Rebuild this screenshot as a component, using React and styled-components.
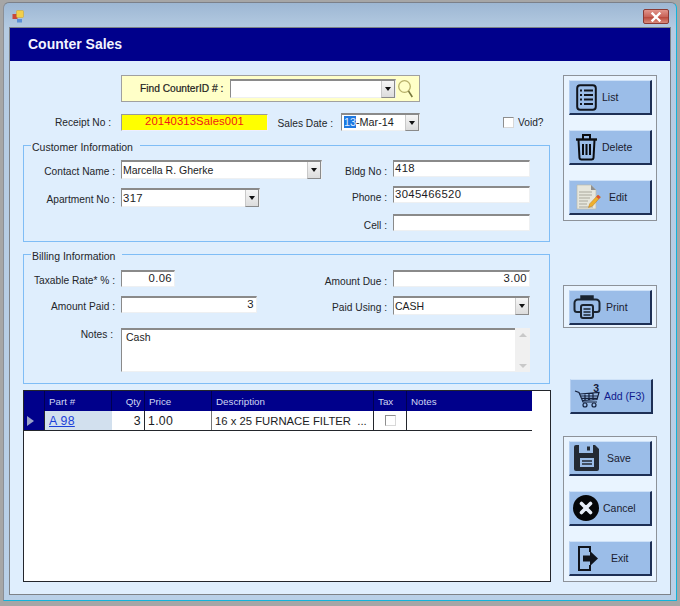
import React from "react";
import styled, { createGlobalStyle } from "styled-components";

const Global = createGlobalStyle`
  html, body { margin: 0; padding: 0; background: #a6a6a6; }
  * { box-sizing: border-box; }
  body { font-family: "Liberation Sans", Arial, sans-serif; }
`;
const Screen = styled.div`
  width: 680px; height: 606px; overflow: hidden; background: #a6a6a6; padding: 2px 3px 5px;
`;
const Win = styled.div`
  width: 674px; height: 599px; display: flex; flex-direction: column; padding: 0 5px 5px 5px;
  background: linear-gradient(180deg, #9db7d3 0, #b5cbe2 26px, #b9d0e8 100%);
  border-radius: 6px 6px 0 0; border: 1px solid #8b8f96; border-bottom-color: #10b4dc; border-right-color: #10b4dc; border-top-color: #7c8088;
`;
const TitleBar = styled.div`
  height: 24px; flex: none; display: flex; align-items: center; justify-content: space-between; padding: 3px 2px 0 3px;
`;
const CloseBtn = styled.div`
  width: 26px; height: 15px; border: 1px solid #8a3a34; border-radius: 2px; display: flex; align-items: center; justify-content: center;
  background: linear-gradient(180deg, #e2958b 0, #c9655a 50%, #b9483b 55%, #d98a7c 100%);
`;
const Client = styled.div`
  width: 662px; height: 568px; flex: none; background: #dfeefd; border: 1px solid #7d8288; display: flex; flex-direction: column;
`;
const Header = styled.div`
  height: 33px; flex: none; background: #00008b; color: #f2f4ff; font-size: 14px; font-weight: 700; padding-left: 18px; display: flex; align-items: center; padding-bottom: 2px;
`;
const Body = styled.div`
  flex: 1; display: flex; padding-top: 14px;
`;
const Main = styled.div`
  width: 550px; flex: none; padding-left: 13px; display: flex; flex-direction: column;
`;
const Side = styled.div`
  width: 94px; margin-left: 3px; display: flex; flex-direction: column;
`;
const FindBar = styled.div`
  margin-left: 98px; width: 299px; height: 27px; background: #ffffc8; border: 1px solid #a0a0a0; display: flex; align-items: center; padding-left: 18px; color: #222;
`;
const FindLabel = styled.span`
  width: 90px; flex: none; white-space: nowrap; font-size: 10.2px; -webkit-text-stroke: 0.2px #222;
`;
const Row = styled.div`
  display: flex; align-items: center; margin-top: ${p => p.$top || 0}px; height: ${p => p.$h || 17}px; flex: none;
`;
const Label = styled.label`
  width: ${p => p.$w}px; flex: none; text-align: right; margin-right: ${p => p.$mr ?? 6}px; font-size: 10.2px; color: #24262a; white-space: nowrap; padding-top: ${p => p.$pt ?? 3}px;
`;
const NotesLabel = styled(Label)`
  align-self: flex-start; padding-top: 1px; padding-right: 2px;
`;
const Sunken = styled.div`
  width: ${p => p.$w}px; height: ${p => p.$h || 17}px; flex: none; background: #fff; display: flex; align-items: center; position: relative;
  border-top: 2px solid #8a8a8a; border-left: 1px solid #8a8a8a; border-right: 1px solid #eef0f2; border-bottom: 1px solid #eef0f2;
  font-size: ${p => p.$mono ? "11.3px" : "10.5px"}; letter-spacing: ${p => p.$mono ? "0.35px" : "0"}; color: #1c1c24; padding: 0 ${p => p.$pr ?? 1}px ${p => p.$pb ?? 2}px 1px;
  justify-content: ${p => p.$right ? "flex-end" : "flex-start"}; white-space: nowrap;
`;
const Grow = styled.span`
  flex: 1; min-width: 0;
`;
const DateText = styled.span`
  letter-spacing: 0; padding-left: 1px; font-size: 10.8px;
`;
const ArrowBox = styled.span`
  width: 14px; align-self: stretch; flex: none; margin: 0 0 -2px 0; background: linear-gradient(180deg, #f6f6f6, #dcdcdc); border-left: 1px solid #c9c9c9; border-right: 1px solid #8a8a8a; border-bottom: 1px solid #8a8a8a; display: flex; align-items: center; justify-content: center;
  &::after { content: ""; border: 3px solid transparent; border-top: 4px solid #111; border-bottom: 0; }
`;
const ReceiptField = styled.div`
  margin-left: 6px; width: 147px; height: 17px; background: #ffff00; border: 1px solid #9a9a9a; border-right-color: #eef; border-bottom-color: #eef; color: #f01818; font-size: 11.3px; text-align: center; line-height: 13px; letter-spacing: 0.1px;
`;
const Sel = styled.span`
  background: #1e78e0; color: #dfeaff;
`;
const CheckBox = styled.span`
  display: inline-block; width: 11px; height: 11px; flex: none; background: #fff; border: 1px solid #8e8e8e; border-right-color: #d8d8d8; border-bottom-color: #d8d8d8;
`;
const VoidWrap = styled.div`
  margin-left: 83px; display: flex; align-items: center; gap: 4px; font-size: 10.2px; color: #24262a;
`;
const Group = styled.div`
  position: relative; width: 527px; height: ${p => p.$h}px; margin-top: ${p => p.$top}px; flex: none; border: 1px solid #7fbdf6; padding: ${p => p.$pt}px 0 0 0;
`;
const Legend = styled.div`
  position: absolute; top: -5px; left: 7px; background: #dfeefd; padding: 0 7px 0 1px; font-size: 10.5px; color: #24262a; line-height: 12px;
`;
const Columns = styled.div`
  display: flex;
`;
const Col = styled.div`
  width: ${p => p.$w}px; flex: none; display: flex; flex-direction: column;
`;
const NotesBox = styled(Sunken)`
  align-items: flex-start; padding: 1px 0 0 4px;
`;
const VBar = styled.div`
  position: absolute; right: -1px; top: -2px; bottom: -1px; width: 15px; background: #f0f0f0; display: flex; flex-direction: column; justify-content: space-between; align-items: center; padding: 5px 0 4px; 
`;
const Table = styled.div`
  width: 528px; height: 192px; margin-top: 6px; flex: none; background: #fff; border: 1px solid #23262c; font-size: 10px;
`;
const TRow = styled.div`
  display: grid; width: 508px; height: ${p => p.$h}px; grid-template-columns: 20px 67px 33px 67px 162px 33px 1fr;
  background: ${p => p.$head ? "#00008b" : "#fff"}; border-bottom: ${p => p.$head ? "none" : "1px solid #23262c"};
`;
const TH = styled.div`
  color: #cfd6f2; display: flex; align-items: center; padding-left: ${p => p.$pl ?? 4}px; border-left: 1px solid #000050; justify-content: ${p => p.$right ? "flex-end" : "flex-start"}; padding-right: 3px; font-size: 9.8px;
`;
const RowHead = styled.div`
  background: #00008b; display: flex; align-items: center; padding-left: 3px; 
  &::after { content: ""; border-left: 7px solid #9aa2c8; border-top: 5px solid transparent; border-bottom: 5px solid transparent; }
`;
const TD = styled.div`
  display: flex; align-items: center; overflow: hidden; white-space: nowrap; padding: 0 3px 0 ${p => p.$pl ?? 3}px; font-size: ${p => p.$big ? "12.3px" : "11.3px"}; letter-spacing: ${p => p.$big ? "0.3px" : "0"}; color: #1c1c24;
  background: ${p => p.$bg || "#fff"}; border-left: 1px solid ${p => p.$line || "#23262c"};
  justify-content: ${p => p.$center ? "center" : p.$right ? "flex-end" : "flex-start"};
`;
const PartLink = styled.a`
  color: #1c3fd8; text-decoration: underline;
`;
const Panel = styled.div`
  width: 94px; height: ${p => p.$h}px; margin-top: ${p => p.$top || 0}px; flex: none; background: #e9f4ff; border: 1px solid #8d9299; padding: 4px 4px 0 5px; display: flex; flex-direction: column; gap: 15px;
`;
const Btn = styled.button`
  width: ${p => p.$w || 83}px; height: 35px; flex: none; padding: 0; display: grid; grid-template-columns: ${p => p.$x}px 1fr; align-items: center; text-align: left;
  background: #9bbde8; border: 0; border-top: 1px solid #cfe2f8; border-left: 1px solid #b4cef0; border-right: 2px solid #1d2f55; border-bottom: 2px solid #1d2f55;
  font: 10.5px "Liberation Sans", Arial, sans-serif; color: ${p => p.$c || "#1a2030"};
`;
const Slot = styled.span`
  display: flex; align-items: center; padding-left: ${p => p.$l}px; height: 32px;
`;
const AddWrap = styled.div`
  margin: 51px 0 0 7px; flex: none;
`;

const IList = () => (
  <svg width="21" height="27" viewBox="0 0 21 27" fill="none" stroke="#10141c"><rect x="1.2" y="1.2" width="18.6" height="24.6" rx="3" strokeWidth="2"/><path d="M4 6.5h2M8 6.5h9M4 11h2M8 11h9M4 15.5h2M8 15.5h9M4 20h2M8 20h9" strokeWidth="2.2"/></svg>
);
const ITrash = () => (
  <svg width="23" height="28" viewBox="0 0 23 28" fill="none" stroke="#0a0c10"><path d="M1 6.5h21" strokeWidth="2.4"/><path d="M8 6V2h7v4" strokeWidth="2"/><path d="M3.5 7l1 18a2 2 0 0 0 2 1.6h10a2 2 0 0 0 2-1.6l1-18" strokeWidth="2"/><path d="M8 11v11M11.5 11v11M15 11v11" strokeWidth="2"/></svg>
);
const IEdit = () => (
  <svg width="26" height="28" viewBox="0 0 26 28"><path d="M2 2h14l5 5v19H2z" fill="#e6e6dc" stroke="#b9b9ac" strokeWidth=".7"/><path d="M16 2v5h5z" fill="#8f8f8f"/><path d="M4 9h13M4 12h13M4 15h11M4 18h9M4 21h8M4 24h14" stroke="#aaa89c" strokeWidth="1"/><path d="M23 12l2.5 2-8 9-4 1.5 1.3-3.8z" fill="#efb02c" stroke="#b9791a" strokeWidth=".5"/><path d="M23 12l2.5 2-1.7 1.9-2.5-2z" fill="#d8503a"/></svg>
);
const IPrint = () => (
  <svg width="28" height="26" viewBox="0 0 28 26" fill="none" stroke="#1a2430"><path d="M8 5V2h12v3" fill="#1a2430" strokeWidth="1.5"/><path d="M7 18H4a2.5 2.5 0 0 1-2.5-2.5V9A3.5 3.5 0 0 1 5 5.5h18A3.5 3.5 0 0 1 26.5 9v6.5A2.5 2.5 0 0 1 24 18h-3" strokeWidth="2"/><rect x="8" y="11" width="12" height="13" rx="2" fill="#9bbde8" strokeWidth="2"/><path d="M10.5 15h7M10.5 18h7M10.5 21h7" strokeWidth="1.5"/></svg>
);
const ICart = () => (
  <svg width="27" height="24" viewBox="0 0 27 24" fill="none" stroke="#14203c" strokeWidth="1.2"><path d="M1 7l4 1.5L9 18h14"/><path d="M6 10l19-1.5-2 7L9 16.5M7 12h17M8 14.3h15M11 9.5v7M15 9v7.5M19 9v7.5"/><circle cx="11" cy="21" r="2"/><circle cx="20" cy="21" r="2"/></svg>
);
const ISave = () => (
  <svg width="27" height="28" viewBox="0 0 27 28"><path d="M1 3a2 2 0 0 1 2-2h19l4 4v20a2 2 0 0 1-2 2H3a2 2 0 0 1-2-2z" fill="#232a34"/><rect x="6" y="1" width="14" height="8" fill="#9bbde8"/><rect x="14" y="2.5" width="3" height="4" fill="#232a34"/><rect x="7" y="14" width="14" height="9" fill="#9bbde8"/><path d="M9 17h10M9 20h10" stroke="#232a34" strokeWidth="1.5"/></svg>
);
const ICancel = () => (
  <svg width="26" height="26" viewBox="0 0 26 26"><circle cx="13" cy="13" r="13" fill="#050608"/><path d="M8.5 8.5l9 9M17.5 8.5l-9 9" stroke="#e8eef8" strokeWidth="3.6" strokeLinecap="round"/></svg>
);
const IExit = () => (
  <svg width="22" height="27" viewBox="0 0 22 27" fill="none"><path d="M13 7V2H2v23h11v-5" stroke="#10141c" strokeWidth="2"/><path d="M6 10.5h7V6l8 7.5-8 7.5v-4.5H6z" fill="#10141c"/></svg>
);
const ISearch = () => (
  <svg width="17" height="20" viewBox="0 0 17 20" fill="none"><circle cx="7.5" cy="7.5" r="5.8" stroke="#b7b06a" strokeWidth="1.3"/><path d="M11.5 12l3.8 6" stroke="#76763c" strokeWidth="1.5"/></svg>
);
const IApp = () => (
  <svg width="13" height="13" viewBox="0 0 13 13"><rect x="0.5" y="4" width="5" height="5" fill="#c8483c"/><rect x="4.5" y="0.5" width="7" height="7" rx="1" fill="#f2cf4a" stroke="#c7a02c" strokeWidth=".5"/><rect x="5" y="9" width="5" height="3.5" fill="#5b8fd8"/></svg>
);
const IClose = () => (
  <svg width="12" height="10" viewBox="0 0 12 10"><path d="M2.5 1.5l7 7M9.5 1.5l-7 7" stroke="#fff" strokeWidth="2.4" strokeLinecap="square"/></svg>
);
const AddStack = styled.span`
  display: flex; flex-direction: column; align-items: flex-end; position: relative; width: 27px;
`;
const Badge = styled.span`
  position: absolute; top: -1px; right: 2px; font-size: 10.5px; font-weight: 700; color: #14203c; line-height: 11px;
`;
const UpDown = styled.span`
  width: 0; height: 0; border-left: 4px solid transparent; border-right: 4px solid transparent; ${p => p.$down ? "border-top: 4px solid #c8c8c8;" : "border-bottom: 4px solid #c8c8c8;"}
`;
const Combo = ({ w, h = 19, mono, children }) => (
  <Sunken $w={w} $h={h} $mono={mono} $pr={0} $pb={1}><Grow>{children}</Grow><ArrowBox /></Sunken>
);

export default function App() {
  return (
    <Screen>
      <Global />
      <Win>
        <TitleBar><IApp /><CloseBtn><IClose /></CloseBtn></TitleBar>
        <Client>
          <Header>Counter Sales</Header>
          <Body>
            <Main>
              <FindBar>
                <FindLabel>Find CounterID # :</FindLabel>
                <Combo w={166} />
                <Slot $l={1}><ISearch /></Slot>
              </FindBar>
              <Row $top={11} $h={18}>
                <Label $w={88} $mr={4} $pt={1}>Receipt No :</Label>
                <ReceiptField>20140313Sales001</ReceiptField>
                <Label $w={65} $mr={8}>Sales Date :</Label>
                <Combo w={79} h={18} mono><DateText><Sel>13</Sel>-Mar-14</DateText></Combo>
                <VoidWrap><CheckBox />Void?</VoidWrap>
              </Row>
              <Group $h={97} $top={14} $pt={14}>
                <Legend>Customer Information</Legend>
                <Columns>
                  <Col $w={298}>
                    <Row $h={19}><Label $w={91}>Contact Name :</Label><Combo w={201}>Marcella R. Gherke</Combo></Row>
                    <Row $h={19} $top={9}><Label $w={91}>Apartment No :</Label><Combo w={139} mono>317</Combo></Row>
                  </Col>
                  <Col $w={208}>
                    <Row><Label $w={65} $pt={5}>Bldg No :</Label><Sunken $w={137} $mono>418</Sunken></Row>
                    <Row $top={9}><Label $w={65} $pt={5}>Phone :</Label><Sunken $w={137} $mono>3045466520</Sunken></Row>
                    <Row $top={11}><Label $w={65} $pt={5}>Cell :</Label><Sunken $w={137} /></Row>
                  </Col>
                </Columns>
              </Group>
              <Group $h={130} $top={12} $pt={15}>
                <Legend>Billing Information</Legend>
                <Columns>
                  <Col $w={298}>
                    <Row><Label $w={91}>Taxable Rate* % :</Label><Sunken $w={54} $mono $right $pr={2}>0.06</Sunken></Row>
                    <Row $top={9}><Label $w={91}>Amount Paid :</Label><Sunken $w={136} $mono $right $pr={2}>3</Sunken></Row>
                  </Col>
                  <Col $w={208}>
                    <Row><Label $w={65} $pt={5}>Amount Due :</Label><Sunken $w={137} $mono $right $pr={2}>3.00</Sunken></Row>
                    <Row $h={19} $top={9}><Label $w={65}>Paid Using :</Label><Combo w={137}>CASH</Combo></Row>
                  </Col>
                </Columns>
                <Row $top={13} $h={44}>
                  <NotesLabel $w={91}>Notes :</NotesLabel>
                  <NotesBox $w={409} $h={44}>Cash<VBar><UpDown /><UpDown $down /></VBar></NotesBox>
                </Row>
              </Group>
              <Table>
                <TRow $h={20} $head>
                  <div />
                  <TH $pl={4}>Part #</TH>
                  <TH $right>Qty</TH>
                  <TH>Price</TH>
                  <TH>Description</TH>
                  <TH>Tax</TH>
                  <TH>Notes</TH>
                </TRow>
                <TRow $h={20}>
                  <RowHead />
                  <TD $bg="#d2e0ee" $pl={4} $big><PartLink>A 98</PartLink></TD>
                  <TD $right $line="#d2e0ee" $big>3</TD>
                  <TD $big>1.00</TD>
                  <TD $line="#777">16 x 25 FURNACE FILTER&nbsp;&nbsp;...</TD>
                  <TD $center><CheckBox /></TD>
                  <TD />
                </TRow>
              </Table>
            </Main>
            <Side>
              <Panel $h={146}>
                <Btn $x={32}><Slot $l={6}><IList /></Slot>List</Btn>
                <Btn $x={32}><Slot $l={5}><ITrash /></Slot>Delete</Btn>
                <Btn $x={39}><Slot $l={5}><IEdit /></Slot>Edit</Btn>
              </Panel>
              <Panel $h={43} $top={64}>
                <Btn $x={36}><Slot $l={3}><IPrint /></Slot>Print</Btn>
              </Panel>
              <AddWrap>
                <Btn $x={33} $c="#101a8c"><Slot $l={3}><AddStack><ICart /><Badge>3</Badge></AddStack></Slot>Add (F3)</Btn>
              </AddWrap>
              <Panel $h={146} $top={22}>
                <Btn $x={37}><Slot $l={3}><ISave /></Slot>Save</Btn>
                <Btn $x={33}><Slot $l={3}><ICancel /></Slot>Cancel</Btn>
                <Btn $x={41}><Slot $l={7}><IExit /></Slot>Exit</Btn>
              </Panel>
            </Side>
          </Body>
        </Client>
      </Win>
    </Screen>
  );
}
